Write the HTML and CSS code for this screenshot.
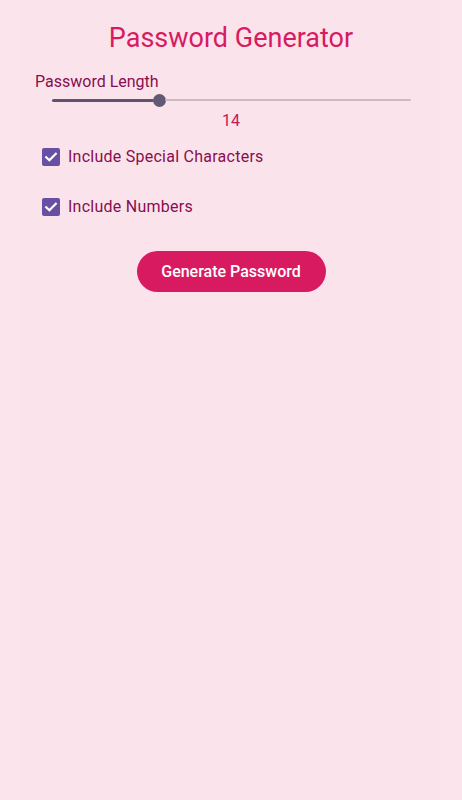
FILE: index.html
```html
<!DOCTYPE html>
<html>
<head>
<meta charset="utf-8">
<link rel="stylesheet" href="styles.css">
</head>
<body>
<main class="app">
  <h1 class="title">Password Generator</h1>
  <section class="length">
    <div class="length-label">Password Length</div>
    <div class="slider">
      <div class="track-active"></div>
      <div class="thumb"></div>
      <div class="track-inactive"></div>
    </div>
    <div class="length-value">14</div>
  </section>
  <label class="option">
    <span class="box"><svg viewBox="0 0 18 18" width="18" height="18"><path d="M4.2 9.2 L7.4 12.3 L13.8 5.8" fill="none" stroke="#fff" stroke-width="2.2" stroke-linecap="square"/></svg></span>
    <span class="option-text">Include Special Characters</span>
  </label>
  <label class="option">
    <span class="box"><svg viewBox="0 0 18 18" width="18" height="18"><path d="M4.2 9.2 L7.4 12.3 L13.8 5.8" fill="none" stroke="#fff" stroke-width="2.2" stroke-linecap="square"/></svg></span>
    <span class="option-text">Include Numbers</span>
  </label>
  <div class="actions">
    <button class="generate">Generate Password</button>
  </div>
</main>
</body>
</html>
```
FILE: styles.css
```css
html, body {
  margin: 0;
  padding: 0;
  height: 100%;
}
body {
  background: #fce4ec;
  font-family: Roboto, "Noto Sans", sans-serif;
}
.app {
  margin: 0 22px;
  min-height: 100%;
  background: #fbe3eb;
  padding: 22px 13px 0;
  box-sizing: border-box;
}
.title {
  margin: 0;
  text-align: center;
  font-size: 27px;
  font-weight: 400;
  color: #d81b60;
  line-height: 32px;
}
.length {
  margin-top: 19px;
}
.length-label {
  font-size: 16px;
  line-height: 18px;
  color: #880e4f;
}
.slider {
  display: flex;
  align-items: center;
  height: 14px;
  margin: 2px 16px 0 17px;
}
.track-active {
  width: 102px;
  height: 3px;
  background: #5f5370;
  border-radius: 2px;
}
.thumb {
  width: 13px;
  height: 13px;
  border-radius: 50%;
  background: #625a75;
  flex: none;
  margin: 0 -1px;
}
.track-inactive {
  flex: 1;
  height: 2px;
  background: #cdb9c6;
  border-radius: 1px;
}
.length-value {
  text-align: center;
  font-size: 16px;
  line-height: 18px;
  color: #c2185b;
  margin-top: 5px;
}
.option {
  display: flex;
  align-items: center;
  gap: 8px;
  margin-left: 7px;
  height: 18px;
  margin-top: 18px;
}
.option + .option {
  margin-top: 32px;
}
.box {
  width: 18px;
  height: 18px;
  border-radius: 2px;
  background: #6750a4;
  display: flex;
}
.option-text {
  font-size: 16px;
  letter-spacing: 0.25px;
  color: #880e4f;
  line-height: 18px;
}
.actions {
  display: flex;
  justify-content: center;
  margin-top: 35px;
}
.generate {
  width: 189px;
  height: 41px;
  border: none;
  border-radius: 21px;
  background: #d81b60;
  color: #fff;
  font-family: Roboto, "Noto Sans", sans-serif;
  font-size: 16px;
  font-weight: 500;
  padding: 0;
}
```
